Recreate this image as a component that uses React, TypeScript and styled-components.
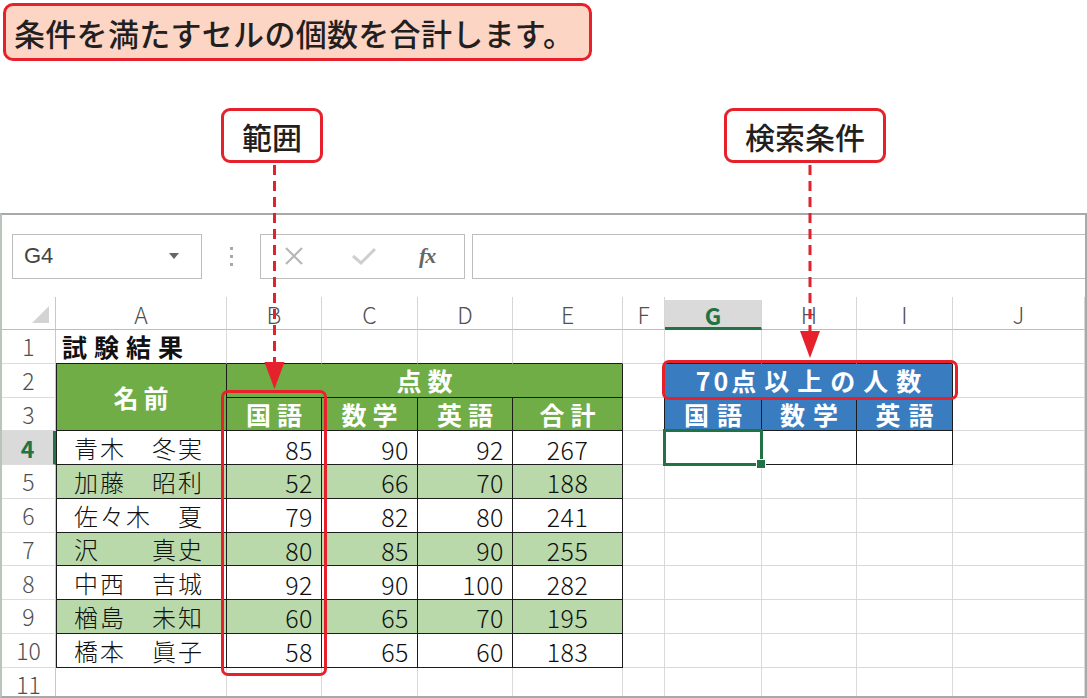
import React from "react";
import styled, { createGlobalStyle } from "styled-components";

const RED = "#e6212b";
const BLACK = "#1c1c1c";
const GRID = "#d9d9d9";
const GREEN = "#70ad47";
const LIGHT = "#b9d9aa";
const BLUE = "#3a7cc0";
const XL = "#217346";
const JP = `"Noto Sans CJK JP", "Noto Sans", sans-serif`;

const Global = createGlobalStyle`
  html, body { margin: 0; padding: 0; background: #fff; }
  body { font-family: ${JP}; }
  #root { width: 1087px; height: 698px; overflow: hidden; }
`;

const Page = styled.div`
  position: relative;
  width: 1087px;
  height: 698px;
  overflow: hidden;
  display: flex;
  flex-direction: column;
  font-family: ${JP};
  color: #231f20;
`;

const Banner = styled.div`
  margin: 3px 0 0 3px;
  width: 589px;
  height: 58px;
  box-sizing: border-box;
  border: 3px solid ${RED};
  border-radius: 10px;
  background: #fcd5c4;
  display: flex;
  align-items: center;
  padding-left: 8px;
  font-size: 31px;
  font-weight: 500;
  letter-spacing: 0.3px;
  white-space: nowrap;
`;

const CalloutRow = styled.div`
  height: 152px;
  box-sizing: border-box;
  padding-top: 47px;
  display: flex;
  align-items: flex-start;
`;

const Callout = styled.div<{ $gap: number }>`
  margin-left: ${(p) => p.$gap}px;
  height: 55px;
  box-sizing: border-box;
  padding: 0 18px;
  border: 3px solid ${RED};
  border-radius: 9px;
  background: #fff;
  display: flex;
  align-items: center;
  font-size: 30px;
  font-weight: 500;
  white-space: nowrap;
`;

const Window = styled.div`
  flex: 1;
  min-height: 0;
  border-top: 2px solid #a9a9a9;
  border-left: 2px solid #b9c5bb;
  border-right: 2px solid #a9a9a9;
  border-bottom: 2px solid #a9a9a9;
  display: flex;
  flex-direction: column;
  overflow: hidden;
`;

const FormulaBar = styled.div`
  height: 82px;
  flex: none;
  display: flex;
  align-items: center;
  padding: 0 0 0 10px;
  box-sizing: border-box;
`;

const Box = styled.div`
  height: 45px;
  box-sizing: border-box;
  border: 1px solid #bdbdbd;
  background: #fff;
  display: flex;
  align-items: center;
`;

const NameBox = styled(Box)`
  width: 190px;
  padding: 0 22px 0 11px;
  justify-content: space-between;
  font-family: "Liberation Sans", Arial, sans-serif;
  font-size: 22px;
  color: #444;
`;

const Caret = styled.span`
  width: 0;
  height: 0;
  border-left: 5px solid transparent;
  border-right: 5px solid transparent;
  border-top: 6px solid #666;
`;

const Dots = styled.div`
  width: 58px;
  display: flex;
  flex-direction: column;
  align-items: center;
  gap: 5px;
`;

const Dot = styled.span`
  width: 3px;
  height: 3px;
  background: #a8a8a8;
`;

const FxBox = styled(Box)`
  width: 205px;
  padding-left: 23px;
`;

const IconSlot = styled.span<{ $w: number }>`
  width: ${(p) => p.$w}px;
  display: flex;
  align-items: center;
`;

const Fx = styled.span`
  font-family: "Liberation Serif", "DejaVu Serif", serif;
  font-style: italic;
  font-weight: 700;
  font-size: 22px;
  color: #666;
  letter-spacing: -1px;
`;

const Input = styled(Box)`
  flex: 1;
  margin-left: 7px;
  border-right: none;
`;

const Sheet = styled.div`
  flex: 1;
  display: grid;
  grid-template-columns: 54px 171px 95px 96px 95px 110px 42px 97px 95px 96px 1fr;
  grid-template-rows: 33px repeat(11, 33.75px);
  overflow: hidden;
`;

const HeadFont = `
  font-family: ${JP};
  font-size: 23px;
`;

const Corner = styled.div`
  grid-row: 1;
  grid-column: 1;
  border-right: 1px solid #c8c8c8;
  border-bottom: 1px solid #bdbdbd;
  display: flex;
  align-items: flex-end;
  justify-content: flex-end;
  padding: 0 6px 6px 0;
  box-sizing: border-box;
`;

const CornerTri = styled.span`
  width: 0;
  height: 0;
  border-left: 17px solid transparent;
  border-bottom: 17px solid #d3d3d3;
`;

const ColHead = styled.div<{ $col: number; $active: boolean }>`
  grid-row: 1;
  grid-column: ${(p) => p.$col};
  ${HeadFont}
  color: ${(p) => (p.$active ? XL : "#505050")};
  font-weight: ${(p) => (p.$active ? 700 : 300)};
  background: ${(p) => (p.$active ? "#dadada" : "#fff")};
  border-right: 1px solid #d6d6d6;
  border-bottom: ${(p) => (p.$active ? `3px solid ${XL}` : "1px solid #bdbdbd")};
  margin-top: ${(p) => (p.$active ? "3px" : "0")};
  box-sizing: border-box;
  display: flex;
  align-items: center;
  justify-content: center;
  padding-top: 2px;
`;

const RowHead = styled.div<{ $row: number; $active: boolean }>`
  grid-row: ${(p) => p.$row};
  grid-column: 1;
  ${HeadFont}
  font-size: 23px;
  color: ${(p) => (p.$active ? XL : "#505050")};
  font-weight: ${(p) => (p.$active ? 700 : 300)};
  background: ${(p) => (p.$active ? "#dadada" : "#fff")};
  border-right: ${(p) => (p.$active ? `3px solid ${XL}` : "1px solid #c8c8c8")};
  border-bottom: 1px solid #dcdcdc;
  box-sizing: border-box;
  display: flex;
  align-items: center;
  justify-content: center;
`;

const Cell = styled.div<{
  $row: string;
  $col: string;
  $bg: string;
  $rb: boolean;
  $bb: boolean;
  $lb: boolean;
  $align: string;
}>`
  grid-row: ${(p) => p.$row};
  grid-column: ${(p) => p.$col};
  background: ${(p) => p.$bg};
  border-right: 1px solid ${(p) => (p.$rb ? BLACK : GRID)};
  border-bottom: 1px solid ${(p) => (p.$bb ? BLACK : GRID)};
  box-shadow: ${(p) => (p.$lb ? `inset 1px 0 0 ${BLACK}` : "none")};
  box-sizing: border-box;
  position: relative;
  display: flex;
  align-items: center;
  justify-content: ${(p) => p.$align};
  white-space: nowrap;
  min-width: 0;
`;

const TitleText = styled.span`
  font-size: 25px;
  font-weight: 700;
  letter-spacing: 7px;
  padding-left: 6px;
  color: #111;
`;

const HeadText = styled.span<{ $ls: number }>`
  font-size: 25px;
  font-weight: 700;
  color: #fff;
  letter-spacing: ${(p) => p.$ls}px;
  padding-left: ${(p) => p.$ls}px;
`;

const HalfDigits = styled.span`
  letter-spacing: 3px;
`;

const NameText = styled.span`
  font-size: 24px;
  font-weight: 300;
  letter-spacing: 2px;
  padding-left: 18px;
  color: #111;
`;

const NumText = styled.span<{ $pad: number }>`
  font-size: 25px;
  font-weight: 300;
  padding-right: ${(p) => p.$pad}px;
  color: #111;
  letter-spacing: 0.5px;
  line-height: 1;
  padding-top: 3px;
`;

const Selection = styled.div`
  position: absolute;
  left: -2px;
  top: -2px;
  right: -2px;
  bottom: -2px;
  border: 3px solid ${XL};
  z-index: 3;
  pointer-events: none;
`;

const Handle = styled.span`
  position: absolute;
  right: -6px;
  bottom: -6px;
  width: 8px;
  height: 8px;
  background: ${XL};
  border: 1px solid #fff;
`;

const Overlay = styled.svg`
  position: absolute;
  left: 0;
  top: 0;
  z-index: 5;
  pointer-events: none;
`;

const HighlightBox = styled.div<{ $x: number; $y: number; $w: number; $h: number }>`
  position: absolute;
  left: ${(p) => p.$x}px;
  top: ${(p) => p.$y}px;
  width: ${(p) => p.$w}px;
  height: ${(p) => p.$h}px;
  box-sizing: border-box;
  border: 3px solid ${RED};
  border-radius: 7px;
  z-index: 4;
  pointer-events: none;
`;

type Kind = "title" | "ghead" | "bhead" | "name" | "num" | "sum" | "empty";
interface Def {
  r: number;
  c: number;
  rs?: number;
  cs?: number;
  text?: string;
  kind: Kind;
  fill?: string;
}

const COLS = ["A", "B", "C", "D", "E", "F", "G", "H", "I", "J"];

const DATA: [string, number, number, number, number][] = [
  ["青木　冬実", 85, 90, 92, 267],
  ["加藤　昭利", 52, 66, 70, 188],
  ["佐々木　夏", 79, 82, 80, 241],
  ["沢　　真史", 80, 85, 90, 255],
  ["中西　吉城", 92, 90, 100, 282],
  ["楢島　未知", 60, 65, 70, 195],
  ["橋本　眞子", 58, 65, 60, 183],
];

const inTable = (r: number, c: number) =>
  (r >= 2 && r <= 10 && c >= 1 && c <= 5) || (r >= 2 && r <= 4 && c >= 7 && c <= 9);

function buildCells(): Def[] {
  const defs: Def[] = [];
  const covered = new Set<string>();
  const add = (d: Def) => {
    defs.push(d);
    for (let r = d.r; r < d.r + (d.rs || 1); r++)
      for (let c = d.c; c < d.c + (d.cs || 1); c++) covered.add(`${r}-${c}`);
  };
  add({ r: 1, c: 1, text: "試験結果", kind: "title" });
  add({ r: 2, c: 1, rs: 2, text: "名前", kind: "ghead" });
  add({ r: 2, c: 2, cs: 4, text: "点数", kind: "ghead" });
  ["国語", "数学", "英語", "合計"].forEach((t, i) => add({ r: 3, c: 2 + i, text: t, kind: "ghead" }));
  add({ r: 2, c: 7, cs: 3, text: "70点以上の人数", kind: "bhead" });
  ["国語", "数学", "英語"].forEach((t, i) => add({ r: 3, c: 7 + i, text: t, kind: "bhead" }));
  DATA.forEach((row, i) => {
    const r = 4 + i;
    const fill = r % 2 === 1 ? LIGHT : undefined;
    add({ r, c: 1, text: row[0], kind: "name", fill });
    add({ r, c: 2, text: String(row[1]), kind: "num", fill });
    add({ r, c: 3, text: String(row[2]), kind: "num", fill });
    add({ r, c: 4, text: String(row[3]), kind: "num", fill });
    add({ r, c: 5, text: String(row[4]), kind: "sum", fill });
  });
  for (let r = 1; r <= 11; r++)
    for (let c = 1; c <= 10; c++) if (!covered.has(`${r}-${c}`)) add({ r, c, kind: "empty" });
  return defs;
}

const CELLS = buildCells();

function renderContent(d: Def) {
  switch (d.kind) {
    case "title":
      return <TitleText>{d.text}</TitleText>;
    case "ghead":
      return <HeadText $ls={d.r === 2 && d.c === 1 ? 5 : 6}>{d.text}</HeadText>;
    case "bhead": {
      const m = /^(\d+)(.*)$/.exec(d.text || "");
      if (m)
        return (
          <HeadText $ls={8}>
            <HalfDigits>{m[1]}</HalfDigits>
            {m[2]}
          </HeadText>
        );
      return <HeadText $ls={8}>{d.text}</HeadText>;
    }
    case "name":
      return <NameText>{d.text}</NameText>;
    case "num":
      return <NumText $pad={8}>{d.text}</NumText>;
    case "sum":
      return <NumText $pad={0}>{d.text}</NumText>;
    default:
      return null;
  }
}

function cellBg(d: Def) {
  if (d.kind === "ghead") return GREEN;
  if (d.kind === "bhead") return BLUE;
  return d.fill || "#fff";
}

function cellAlign(d: Def) {
  if (d.kind === "num") return "flex-end";
  if (d.kind === "title" || d.kind === "name") return "flex-start";
  return "center";
}

export default function App() {
  return (
    <Page>
      <Global />
      <Banner>条件を満たすセルの個数を合計します。</Banner>
      <CalloutRow>
        <Callout $gap={221}>範囲</Callout>
        <Callout $gap={401}>検索条件</Callout>
      </CalloutRow>
      <Window>
        <FormulaBar>
          <NameBox>
            <span>G4</span>
            <Caret />
          </NameBox>
          <Dots>
            <Dot />
            <Dot />
            <Dot />
          </Dots>
          <FxBox>
            <IconSlot $w={67}>
              <svg width="20" height="20" viewBox="0 0 20 20">
                <path d="M2 2 L18 18 M18 2 L2 18" stroke="#b7b7b7" strokeWidth="2.2" fill="none" />
              </svg>
            </IconSlot>
            <IconSlot $w={68}>
              <svg width="26" height="20" viewBox="0 0 26 20">
                <path d="M2 10 L10 17 L24 3" stroke="#cfcfcf" strokeWidth="3" fill="none" />
              </svg>
            </IconSlot>
            <Fx>fx</Fx>
          </FxBox>
          <Input />
        </FormulaBar>
        <Sheet>
          <Corner>
            <CornerTri />
          </Corner>
          {COLS.map((c, i) => (
            <ColHead key={c} $col={i + 2} $active={c === "G"}>
              {c}
            </ColHead>
          ))}
          {Array.from({ length: 11 }, (_, i) => (
            <RowHead key={i} $row={i + 2} $active={i + 1 === 4}>
              {i + 1}
            </RowHead>
          ))}
          {CELLS.map((d) => {
            const r2 = d.r + (d.rs || 1) - 1;
            const c2 = d.c + (d.cs || 1) - 1;
            const rb = inTable(d.r, c2) || inTable(d.r, c2 + 1);
            const bb = inTable(r2, d.c) || inTable(r2 + 1, d.c);
            const lb = d.c === 1 && inTable(d.r, 1);
            return (
              <Cell
                key={`${d.r}-${d.c}`}
                $row={`${d.r + 1} / span ${d.rs || 1}`}
                $col={`${d.c + 1} / span ${d.cs || 1}`}
                $bg={cellBg(d)}
                $rb={rb}
                $bb={bb}
                $lb={lb}
                $align={cellAlign(d)}
              >
                {renderContent(d)}
                {d.r === 4 && d.c === 7 && (
                  <Selection>
                    <Handle />
                  </Selection>
                )}
              </Cell>
            );
          })}
        </Sheet>
      </Window>
      <HighlightBox $x={221} $y={390} $w={106} $h={286} />
      <HighlightBox $x={662} $y={360} $w={296} $h={40} />
      <Overlay width="1087" height="698" viewBox="0 0 1087 698">
        <line x1="274.5" y1="165" x2="274.5" y2="364" stroke={RED} strokeWidth="3" strokeDasharray="10 6" />
        <polygon points="264.5,362 284.5,362 274.5,389" fill={RED} />
        <line x1="810" y1="165" x2="810" y2="333" stroke={RED} strokeWidth="3" strokeDasharray="10 6" />
        <polygon points="800,331 820,331 810,358" fill={RED} />
      </Overlay>
    </Page>
  );
}
